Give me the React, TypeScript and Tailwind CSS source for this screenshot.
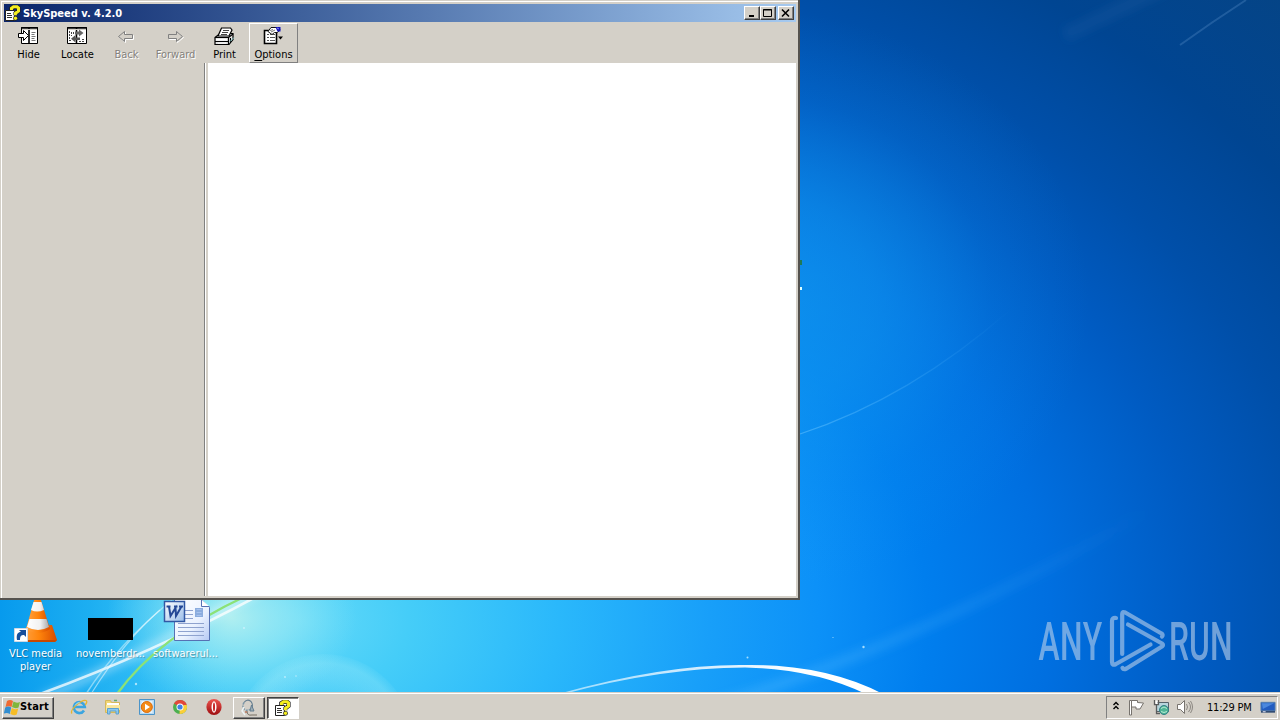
import type { ReactNode } from "react";

const RAISED = "border border-t-white border-l-white border-r-[#404040] border-b-[#404040] bg-[#d4d0c8]";

function Wallpaper() {
  return (
    <svg className="absolute inset-0" width="1280" height="720" viewBox="0 0 1280 720">
      <defs>
        <radialGradient id="sky" gradientUnits="userSpaceOnUse" cx="0" cy="0" r="1.3" gradientTransform="translate(300 620) scale(1050 720)">
          <stop offset="0" stopColor="#63d9f9" />
          <stop offset=".08" stopColor="#45cdf8" />
          <stop offset=".19" stopColor="#2ab8fb" />
          <stop offset=".3" stopColor="#189ff9" />
          <stop offset=".38" stopColor="#0c91f8" />
          <stop offset=".46" stopColor="#007eee" />
          <stop offset=".55" stopColor="#006fe0" />
          <stop offset=".66" stopColor="#005bc2" />
          <stop offset=".75" stopColor="#004fa9" />
          <stop offset=".86" stopColor="#004592" />
          <stop offset="1" stopColor="#064484" />
        </radialGradient>
        <radialGradient id="glow">
          <stop offset="0" stopColor="#159ef0" stopOpacity=".62" />
          <stop offset=".35" stopColor="#159ef0" stopOpacity=".45" />
          <stop offset=".7" stopColor="#159ef0" stopOpacity=".12" />
          <stop offset="1" stopColor="#159ef0" stopOpacity="0" />
        </radialGradient>
        <radialGradient id="haze">
          <stop offset="0" stopColor="#c0f4ef" stopOpacity=".85" />
          <stop offset=".45" stopColor="#a5edf3" stopOpacity=".55" />
          <stop offset="1" stopColor="#8ae6f5" stopOpacity="0" />
        </radialGradient>
        <linearGradient id="left" x1="0" x2="1">
          <stop offset="0" stopColor="#079aed" />
          <stop offset=".4" stopColor="#18abef" stopOpacity=".8" />
          <stop offset="1" stopColor="#3bc5f4" stopOpacity="0" />
        </linearGradient>
        <radialGradient id="bubble" cx=".5" cy=".5" r=".5">
          <stop offset=".5" stopColor="#fff" stopOpacity=".02" />
          <stop offset=".9" stopColor="#c4f6fa" stopOpacity=".24" />
          <stop offset="1" stopColor="#c4f6fa" stopOpacity=".05" />
        </radialGradient>
        <linearGradient id="arc" gradientUnits="userSpaceOnUse" x1="560" y1="0" x2="800" y2="0">
          <stop offset="0" stopColor="#fff" stopOpacity=".55" />
          <stop offset="1" stopColor="#fff" />
        </linearGradient>
        <linearGradient id="fade" gradientUnits="userSpaceOnUse" x1="780" y1="0" x2="1150" y2="0">
          <stop offset="0" stopColor="#58bcff" stopOpacity=".3" />
          <stop offset="1" stopColor="#58bcff" stopOpacity="0" />
        </linearGradient>
        <linearGradient id="thread" gradientUnits="userSpaceOnUse" x1="800" y1="0" x2="1010" y2="0">
          <stop offset="0" stopColor="#6cc6ff" stopOpacity=".5" />
          <stop offset="1" stopColor="#58bcff" stopOpacity="0" />
        </linearGradient>
        <filter id="b1" x="-20%" y="-50%" width="140%" height="200%"><feGaussianBlur stdDeviation=".7" /></filter>
        <filter id="b4" x="-20%" y="-50%" width="140%" height="200%"><feGaussianBlur stdDeviation="4" /></filter>
      </defs>
      <rect width="1280" height="720" fill="url(#sky)" />
      <ellipse cx="760" cy="300" rx="330" ry="290" fill="url(#glow)" />
      <rect y="560" width="230" height="160" fill="url(#left)" />
      <ellipse cx="232" cy="618" rx="125" ry="90" fill="url(#haze)" />
      <circle cx="323" cy="746" r="92" fill="url(#bubble)" />
      {/* ribbons behind the desktop icons */}
      <g fill="none">
        <path d="M40 700Q150 650 260 590" stroke="#fff" strokeOpacity=".35" strokeWidth="9" filter="url(#b4)" />
        <path d="M40 694Q155 652 265 592" stroke="#fff" strokeOpacity=".75" strokeWidth="2.6" filter="url(#b1)" />
        <path d="M86 694Q117 645 172 600" stroke="#dffaff" strokeOpacity=".5" strokeWidth="1.5" />
        <path d="M91 694Q125 640 160 610" stroke="#fff" strokeOpacity=".5" strokeWidth="1.2" />
        <path d="M117 694Q158 637 246 596" stroke="#8be277" strokeWidth="2.4" filter="url(#b1)" />
        <path d="M690 712Q900 655 1150 510" stroke="url(#fade)" strokeWidth="11" filter="url(#b4)" />
        <path d="M800 434Q910 398 1010 310" stroke="url(#thread)" strokeWidth="1.3" />
        <path d="M1180 45Q1212 22 1246 0" stroke="#568bc5" strokeOpacity=".35" strokeWidth="2" filter="url(#b1)" />
        <path d="M1065 35L1180 -20" stroke="#4d86bd" strokeOpacity=".12" strokeWidth="14" filter="url(#b4)" />
      </g>
      <path d="M558 694Q665 664 745 665Q825 664 883 694L868 695Q815 669 745 667.500Q660 668 564 694Z" fill="url(#arc)" filter="url(#b1)" />
      <g fill="#d5f4ff" fillOpacity=".75">
        <circle cx="747.500" cy="657.500" r="1" />
        <circle cx="863.500" cy="647" r="1.200" />
        <circle cx="833" cy="637.500" r=".6" />
        <circle cx="136" cy="684" r="1.200" />
        <circle cx="285" cy="677" r=".9" />
        <circle cx="296" cy="676" r=".8" />
        <circle cx="244" cy="628" r="1" />
        <circle cx="135" cy="657" r=".8" />
      </g>
      <path d="M799 260h3v5h-3z" fill="#1f7a55" />
      <path d="M799 287h3v3h-3z" fill="#dcffff" />
    </svg>
  );
}

function HelpIcon({ className }: { className?: string }) {
  return (
    <svg className={className} width="16" height="16" viewBox="0 0 16 16">
      <path d="M.5 5.500h9v10h-9z" fill="#fff" stroke="#222" />
      <path d="M2 8.500h4M2 10.500h5M2 12.500h5" stroke="#333" />
      <path d="M6.300 5V3.200L8.500 1.800h3.500L13.500 3v3l-3 2.300v2" fill="none" stroke="#222" strokeWidth="4.200" />
      <path d="M6.500 5V3.200L8.500 1.800h3.500L13.500 3v3l-3 2.300v2" fill="none" stroke="#f5ee20" strokeWidth="3" />
      <circle cx="10.500" cy="13.300" r="2.400" fill="#222" />
      <circle cx="10.500" cy="13.300" r="1.700" fill="#f5ee20" />
    </svg>
  );
}

function HideIcon() {
  return (
    <svg width="22" height="20" viewBox="0 0 22 20">
      <path d="M3.500 1.500h16v16h-16z" fill="#fff" stroke="#000" />
      <path d="M3 2h17M11 2v16" stroke="#000" strokeWidth="1.600" />
      <path d="M4 3.500h15" stroke="#d4d0c8" />
      <path d="M13.500 6.500h4M13.500 8.500h3M13.500 10.500h4M13.500 12.500h3M13.500 14.500h4" stroke="#777" />
      <path d="M.5 7.500h5v-3l5 5-5 5v-3h-5z" fill="#fff" stroke="#000" />
    </svg>
  );
}

function LocateIcon() {
  return (
    <svg width="22" height="20" viewBox="0 0 22 20">
      <path d="M.5 1.500h19v16h-19z" fill="#fff" stroke="#000" />
      <path d="M0 2h20M9.500 2v16" stroke="#000" strokeWidth="1.500" />
      <path d="M1 3.500h18" stroke="#d4d0c8" />
      <path d="M2.500 5v8M4.500 6v4M6.500 6v3M2 14.500h3M12 15.500h5M15 13.500h3" stroke="#444" strokeDasharray="2 1" />
      <path d="M8 5.500h4V3.500l4.500 3.500L12 10.500V8.500H8z" fill="#666" />
      <path d="M13 11.500H8.500V9L4 12.700l4.500 3.800v-2.500H13z" fill="#555" />
    </svg>
  );
}

function ArrowIcon({ flip }: { flip?: boolean }) {
  const d = "M1.500 10.500l6-5v3h8v4h-8v3z";
  return (
    <svg width="18" height="20" viewBox="0 0 18 20">
      <g transform={flip ? "translate(17 0) scale(-1 1)" : "translate(-1 0)"}>
        <path d={d} fill="none" stroke="#fff" transform={flip ? "translate(-1 1)" : "translate(1 1)"} />
        <path d={d} fill="#d4d0c8" stroke="#808080" />
      </g>
    </svg>
  );
}

function PrintIcon() {
  return (
    <svg width="22" height="20" viewBox="0 0 22 20">
      <path d="M1 11.500l5-4h13v6l-4 5H1z" fill="#e3e3e3" stroke="#000" strokeWidth="1.200" />
      <path d="M7.500 2h9L18 4l-3 6H4z" fill="#fff" stroke="#000" strokeWidth="1.200" />
      <path d="M9 4.500h6M8 6.500h6M7 8.500h6" stroke="#444" />
      <path d="M1 11.500h13.500v7M14.500 11.500L19 8" fill="none" stroke="#000" strokeWidth="1.200" />
      <path d="M2 13h11v1.500H2z" fill="#fff" />
      <path d="M1 15.500h13M16.500 12v5" stroke="#000" />
      <path d="M4 16.500h8v1.500H4z" fill="#f3f3f3" />
      <path d="M16 15.500l4-4" stroke="#8bd4d6" />
    </svg>
  );
}

function OptionsIcon() {
  return (
    <svg width="22" height="20" viewBox="0 0 22 20">
      <path d="M1.500 4.500h12v13h-12z" fill="#fff" stroke="#000" strokeWidth="1.600" />
      <path d="M4 8.500h2M7 8.500h5M4 11.500h2M7 11.500h5M4 14.500h2M7 14.500h5" stroke="#555" />
      <path d="M5 5.500L8 1.500h6l3 2-2.500 3h-3L9 8.500z" fill="#fff" stroke="#111" />
      <path d="M7 4.500l3-1M8 6l4-2" stroke="#555" strokeWidth=".8" />
      <path d="M12.500 1H17.500v4.500h-3z" fill="#1010b8" />
      <path d="M14 2l2 1" stroke="#8989f2" />
      <path d="M15 10.500h5L17.500 13.500z" fill="#000" />
    </svg>
  );
}

type Tool = { label: ReactNode; icon: ReactNode; disabled?: boolean; active?: boolean; id: string };

const TOOLS: Tool[] = [
  { id: "hide", label: "Hide", icon: <HideIcon /> },
  { id: "locate", label: "Locate", icon: <LocateIcon /> },
  { id: "back", label: "Back", icon: <ArrowIcon />, disabled: true },
  { id: "forward", label: "Forward", icon: <ArrowIcon flip />, disabled: true },
  { id: "print", label: "Print", icon: <PrintIcon /> },
  { id: "options", label: <><u className="underline-offset-2">O</u>ptions</>, icon: <OptionsIcon />, active: true },
];

function WindowButton({ children, className = "" }: { children: ReactNode; className?: string }) {
  return (
    <button type="button" className={`w-4 h-[14px] flex items-center justify-center ${RAISED} shadow-[inset_-1px_-1px_#808080] ${className}`}>
      <svg width="12" height="11" viewBox="0 0 12 11" fill="none" stroke="#000" className="shrink-0">{children}</svg>
    </button>
  );
}

function HelpWindow() {
  return (
    <section className="absolute left-0 top-0 w-[800px] h-[600px] bg-[#d4d0c8] border-r-2 border-b-2 border-[#55524e] flex flex-col pl-[2px] shadow-[inset_1px_1px_#d4d0c8,inset_2px_2px_#fff]">
      <header className="mt-1 ml-[2px] mr-[2px] h-[18px] shrink-0 flex items-center pl-px bg-gradient-to-r from-[#0a246a] to-[#a6caf0]">
        <HelpIcon />
        <h1 className="ml-[2px] pt-px w-[110px] whitespace-nowrap text-[11px] leading-[17px] font-bold text-white">SkySpeed v. 4.2.0</h1>
        <div className="ml-auto flex pr-[2px]">
          <WindowButton><path d="M3 8h5" strokeWidth="2" /></WindowButton>
          <WindowButton><path d="M1.500 1.500h8v7h-8zM1 2h9" /></WindowButton>
          <WindowButton className="ml-[2px]"><path d="M2 1.500l7 7M9 1.500l-7 7" strokeWidth="1.600" /></WindowButton>
        </div>
      </header>
      <nav className="h-[41px] shrink-0 flex pl-[2px] pt-[1px]">
        {TOOLS.map(({ id, label, icon, disabled, active }) => (
          <button
            type="button"
            key={id}
            className={`w-[49px] h-[40px] flex flex-col items-center pt-[2px] text-[11px] leading-[14px] border whitespace-nowrap ${
              active ? "border-t-white border-l-white border-r-[#808080] border-b-[#808080]" : "border-transparent"
            } ${disabled ? "text-[#85827d] [text-shadow:1px_1px_#fff]" : "text-black"}`}
          >
            {icon}
            <span className="mt-[2px]">{label}</span>
          </button>
        ))}
      </nav>
      <div className="flex-1 flex pb-[2px] pr-[2px]">
        <aside className="w-[203px] border-r border-[#808080]" />
        <main className="flex-1 bg-white border-l border-white shadow-[inset_2px_0_#d4d0c8]" />
      </div>
    </section>
  );
}

function VlcIcon() {
  return (
    <svg className="ml-[2px]" width="48" height="48" viewBox="0 0 48 48">
      <defs>
        <linearGradient id="cone"><stop stopColor="#ffa54a" /><stop offset=".5" stopColor="#ff850c" /><stop offset="1" stopColor="#d84b00" /></linearGradient>
        <linearGradient id="band"><stop stopColor="#fff" /><stop offset=".6" stopColor="#f1f1f1" /><stop offset="1" stopColor="#a8a8a8" /></linearGradient>
      </defs>
      <path d="M14 29l25-1 5 15-2 2H10l-2-2z" fill="url(#cone)" />
      <path d="M7 43h37l-2 2H9z" fill="#c84800" />
      <path d="M22 0h5l10 32q-12 8-24 0z" fill="url(#cone)" />
      <path d="M20.500 5h8l2.500 8q-7 3-13 0zM16.500 22h17l2.500 8q-11 6-22 0z" fill="url(#band)" />
      <path d="M1.500 31.500h13v13h-13z" fill="#fff" stroke="#d0d9e4" />
      <path d="M4 43c-1-6 1-8 4-8l-2-2h7v7l-2-2c-3 0-4 1-4 5z" fill="#174f9c" />
    </svg>
  );
}

function WordDocIcon() {
  return (
    <svg className="ml-[2px]" width="48" height="48" viewBox="0 0 48 48">
      <defs>
        <linearGradient id="paper" x1="0" y1="0" x2="1" y2="1"><stop stopColor="#fff" /><stop offset=".6" stopColor="#eaf2ff" /><stop offset="1" stopColor="#b5c9f4" /></linearGradient>
        <linearGradient id="wbox" x1="0" y1="0" x2="1" y2="1"><stop stopColor="#fff" /><stop offset="1" stopColor="#98bce9" /></linearGradient>
      </defs>
      <path d="M11.500 2.500h27l8 8v33h-35z" fill="url(#paper)" stroke="#5671b3" />
      <path d="M38.500 2.500v7h8" fill="#fff" stroke="#5671b3" />
      <path d="M32 11h8v9h-8z" fill="#8badde" />
      <path d="M33.500 12.500h5M33.500 15.500h5M33.500 18.500h5" stroke="#a8c3ef" />
      <path d="M22 13.500h8M22 17.500h8M22 21.500h8M15 26.500h26M15 30.500h26M15 34.500h26M15 38.500h26" stroke="#8fa3cf" />
      <path d="M1.500 4.500h20v20h-20z" fill="url(#wbox)" stroke="#3158a4" strokeWidth="1.500" />
      <path d="M3.500 9.500h4M6 9.500l1.500 9.500 5-8 .5 8 5.500-9.500M11 9.500h3.500M16 9.500h4" fill="none" stroke="#244896" strokeWidth="2" />
    </svg>
  );
}

const SHORTCUTS: { id: string; label: string; icon: ReactNode }[] = [
  { id: "vlc", label: "VLC media player", icon: <VlcIcon /> },
  { id: "november", label: "novemberdr...", icon: <div className="w-[45px] h-[22px] mt-[21px] mb-[5px] bg-black" /> },
  { id: "software", label: "softwarerul...", icon: <WordDocIcon /> },
];

function Watermark() {
  return (
    <svg className="absolute left-[1030px] top-[600px]" width="210" height="80" viewBox="0 0 210 80" opacity=".62">
      <g fill="#b5cde9" fontFamily="Roboto, sans-serif" fontSize="53" fontWeight="500">
        <text transform="translate(8.500 59.500) scale(.6 1)" textLength="106" lengthAdjust="spacing">ANY</text>
        <text transform="translate(139 59.500) scale(.6 1)" textLength="106" lengthAdjust="spacing">RUN</text>
      </g>
      <g fill="none" stroke="#b5cde9" strokeWidth="4.200" strokeLinejoin="round" strokeLinecap="round">
        <path d="M86 18q-4-.5-4 3v41q0 4 4 2L120.500 44.500" />
        <path d="M92.200 54V14q0-3 3-1.500L131.500 33.500q2 1 .5 3" />
        <path d="M98 24.500L132 43.500q2 1.500 0 3L96.500 68.500q-3 1.500-4-.5" />
      </g>
    </svg>
  );
}

function StartFlag() {
  return (
    <svg width="17" height="17" viewBox="0 0 17 17">
      <path d="M3 2q3-2 6 0L7.500 8Q5 6.500 1.500 8z" fill="#ef6a32" />
      <path d="M9.500 2.500q3 2 6.500.5l-1.500 5.500q-3 1.500-6.500-.5z" fill="#80b63b" />
      <path d="M1.200 8.500q3-1.800 6 0L5.800 15q-3-2-6-.3z" fill="#338ed0" />
      <path d="M7.800 9q3 2 6.400.5L12.700 15.500q-3 1.500-6.400-.5z" fill="#f7bd25" />
    </svg>
  );
}

function IeIcon() {
  return (
    <svg width="18" height="18" viewBox="0 0 18 18" fill="none">
      <path d="M14 12.500a5.500 5.500 0 1 1 .8-3.500H5" stroke="#3ba5e0" strokeWidth="2.600" />
      <path d="M2 15.500C-1 12 12 1 16 2.500c1.500.8.500 3-.8 4.500" stroke="#e5b52f" strokeWidth="1.300" />
      <path d="M5 7.500q1.500-3 4.500-3" stroke="#9bddf9" />
    </svg>
  );
}

function FolderIcon() {
  return (
    <svg width="18" height="18" viewBox="0 0 18 18">
      <path d="M1.500 2.500h5l1 2h8v10h-14z" fill="#f1d675" stroke="#d6b85a" />
      <path d="M3 5h12v2H3z" fill="#fff" />
      <path d="M2 7h14v5H2z" fill="#f9e69d" />
      <path d="M3.500 16V10.500h11V16H12v-3H6v3z" fill="#8bc8ef" stroke="#5ba1cf" />
      <path d="M10 2.500h3" stroke="#61ac69" strokeWidth="1.500" />
    </svg>
  );
}

function PlayerIcon() {
  return (
    <svg width="18" height="18" viewBox="0 0 18 18">
      <path d="M1.500 1.500h15v15h-15z" fill="#b8daf3" stroke="#4b94c9" />
      <path d="M3.500 3h11v12h-11z" fill="#e2f2fd" />
      <circle cx="8.800" cy="9" r="5.500" fill="#f38a18" stroke="#dc6b09" />
      <path d="M7 5.700l5 3.300-5 3.300z" fill="#fff" />
    </svg>
  );
}

function ChromeIcon() {
  return (
    <svg width="18" height="18" viewBox="0 0 18 18">
      <circle cx="9" cy="9" r="7" fill="#4caf50" />
      <path d="M9 9L3 5.400A7 7 0 0 1 15.300 6z" fill="#e2473b" />
      <path d="M9 9l6.300-3A7 7 0 0 1 8.500 16z" fill="#fbcf38" />
      <path d="M9 5.500h6.200L15.600 7H9z" fill="#e2473b" />
      <circle cx="9" cy="9" r="3.500" fill="#fff" />
      <circle cx="9" cy="9" r="2.600" fill="#3e82e5" />
    </svg>
  );
}

function OperaIcon() {
  return (
    <svg width="18" height="18" viewBox="0 0 18 18">
      <defs><linearGradient id="opera" x2="0" y2="1"><stop stopColor="#ed5550" /><stop offset="1" stopColor="#9d0d10" /></linearGradient></defs>
      <ellipse cx="9" cy="9" rx="7.600" ry="8" fill="url(#opera)" />
      <ellipse cx="9" cy="9" rx="2.500" ry="5.800" fill="#fff" />
      <ellipse cx="9" cy="9" rx="1" ry="4.600" fill="#c72426" />
    </svg>
  );
}

function MagnifierIcon() {
  return (
    <svg width="20" height="18" viewBox="0 0 20 18" fill="none">
      <path d="M5 3.500q3-4 7-1 3 4 0 7" stroke="#667f91" strokeWidth="1.200" />
      <path d="M5 3.500q-3 5 2 8l4-1" stroke="#7d98a8" strokeDasharray="2 1" strokeWidth="1.500" />
      <path d="M5 8l-2 4 3 4" stroke="#edf4f5" strokeWidth="1.500" />
      <path d="M12.500 6l2.500 6h-4z" fill="#9eaeb6" stroke="#637d90" />
      <path d="M8 12q0 5 5 4h5" stroke="#766f63" />
      <circle cx="7" cy="13" r="1" fill="#b97860" />
    </svg>
  );
}

const QUICK_LAUNCH = [
  { id: "ie", icon: <IeIcon /> },
  { id: "explorer", icon: <FolderIcon /> },
  { id: "player", icon: <PlayerIcon /> },
  { id: "chrome", icon: <ChromeIcon /> },
  { id: "opera", icon: <OperaIcon /> },
];

function Tray() {
  return (
    <div className="ml-auto mr-[2px] w-[172px] h-[23px] flex items-center border border-t-[#808080] border-l-[#808080] border-r-white border-b-white">
      <svg className="ml-[5px] mb-[4px]" width="8" height="10" viewBox="0 0 8 10" fill="none" stroke="#000" strokeWidth="1.400">
        <path d="M1.500 4L4 1.500 6.500 4M1.500 8L4 5.500 6.500 8" />
      </svg>
      <svg className="ml-[8px]" width="17" height="17" viewBox="0 0 17 17">
        <path d="M1.500 1.500h2V16h-2z" fill="#fff" stroke="#77736e" />
        <path d="M3.500 1.500H9.500v2l6 .5-3.500 6H8V8H3.500z" fill="#fff" stroke="#77736e" />
      </svg>
      <svg className="ml-[8px]" width="17" height="17" viewBox="0 0 17 17">
        <path d="M3.500 3.500h12v9h-12z" fill="#b7d5dc" stroke="#56636a" />
        <path d="M1.500 1v4.500h4V1M3.500 5v9.500H7" fill="none" stroke="#5c5c5c" strokeWidth="1.300" />
        <path d="M2.500 1.500h2V5h-2z" fill="#fff" />
        <circle cx="11" cy="11" r="4.500" fill="#4fb696" stroke="#327f86" />
        <path d="M8 9.500q3-3 6 0M8 12.500q3 2 6 0" stroke="#b7ead3" fill="none" />
      </svg>
      <svg className="ml-[6px] mb-[2px]" width="17" height="16" viewBox="0 0 17 16" fill="none" stroke="#77736e">
        <path d="M1.500 5.500h3l4-4v13l-4-4h-3z" fill="#fff" />
        <path d="M10.500 5q2 3 0 6M12.500 3q4 5 0 10M14.500 2q4 6 0 12" strokeWidth=".8" />
      </svg>
      <span className="ml-[14px] pt-px w-[47px] whitespace-nowrap text-[11px] tracking-[-0.2px]">11:29 PM</span>
      <svg className="ml-[6px]" width="16" height="13" viewBox="0 0 17 13">
        <path d="M1 1h15v9H1z" fill="#225cc0" stroke="#537eae" />
        <path d="M2 2h13L3 8z" fill="#4b88dd" />
        <path d="M1 11h15" stroke="#314c73" strokeWidth="2" />
        <path d="M3 11h3" stroke="#eef" />
      </svg>
    </div>
  );
}

function Taskbar() {
  return (
    <footer className="relative h-7 shrink-0 bg-[#d4d0c8] border-t border-[#d4d0c8] shadow-[inset_0_1px_#fff] flex items-center pl-[2px] pt-[2px]">
      <button type="button" className={`w-[52px] h-[22px] flex items-center pl-px text-[11px] font-bold ${RAISED} shadow-[inset_-1px_-1px_#808080]`}>
        <StartFlag />
        <span className="-ml-px tracking-[0.15px]">Start</span>
      </button>
      <div className="ml-[16px] mb-px flex gap-[15.800px]">
        {QUICK_LAUNCH.map(({ id, icon }) => <div key={id}>{icon}</div>)}
      </div>
      <button type="button" className={`ml-[10px] w-8 h-[22px] flex items-center justify-center ${RAISED} shadow-[inset_-1px_-1px_#808080]`}>
        <MagnifierIcon />
      </button>
      <button type="button" className="ml-[2px] w-8 h-[22px] flex items-center justify-center bg-white border border-t-[#404040] border-l-[#404040] border-r-white border-b-white shadow-[inset_1px_1px_#808080]">
        <HelpIcon />
      </button>
      <Tray />
    </footer>
  );
}

export default function App() {
  return (
    <div className="relative w-[1280px] h-[720px] overflow-hidden flex flex-col font-['DejaVu_Sans_Condensed','DejaVu_Sans',sans-serif]">
      <Wallpaper />
      <div className="relative flex-1">
        <div className="flex pt-[597px] -ml-[2px]">
          {SHORTCUTS.map(({ id, label, icon }) => (
            <div key={id} className="w-[75px] shrink-0 flex flex-col items-center text-[11px] leading-[13px] text-center text-white [text-shadow:1px_1px_1px_#0005]">
              {icon}
              <span className="mt-[2px] w-[70px]">{label}</span>
            </div>
          ))}
        </div>
        <Watermark />
        <HelpWindow />
      </div>
      <Taskbar />
    </div>
  );
}
